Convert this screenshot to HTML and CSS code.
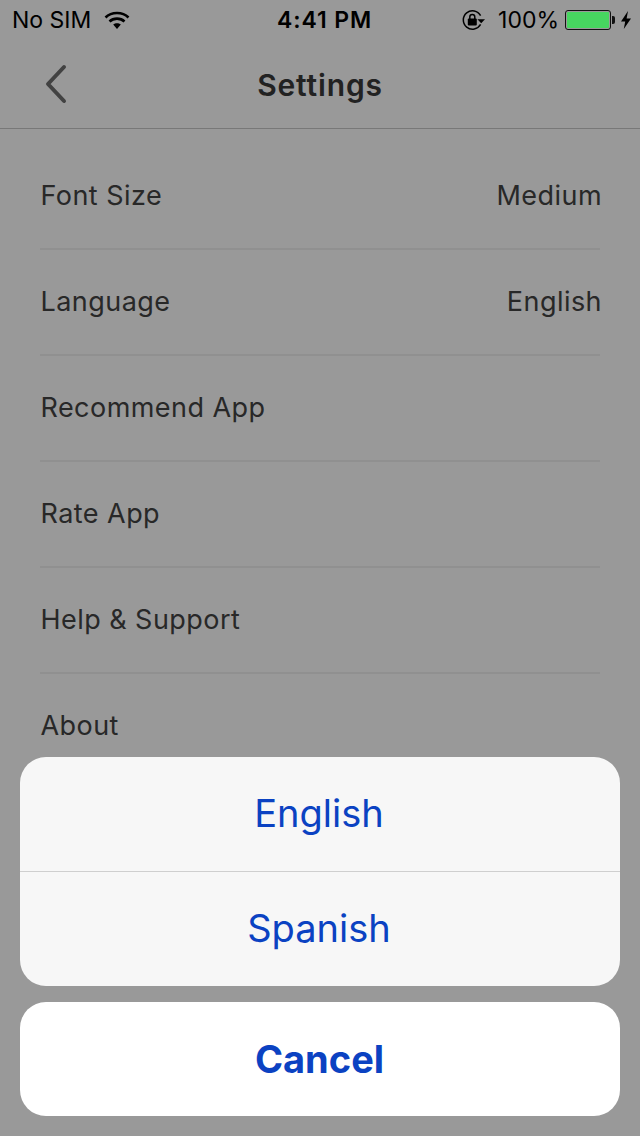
FILE: index.html
```html
<!DOCTYPE html>
<html lang="en">
<head>
  <meta charset="UTF-8" />
  <meta name="viewport" content="width=device-width, initial-scale=1.0">
  <title>Settings</title>
  <link rel="stylesheet" href="styles.css">
</head>
<body>
  <div class="phone">
    <div class="status-bar">
      <div class="status-left">
        <span>No SIM</span>
        <svg class="wifi" width="26" height="20" viewBox="0 0 26 20">
          <path d="M1.5 7.5C7.5 1.5 18.5 1.5 24.5 7.5" fill="none" stroke="#000" stroke-width="2.6"/>
          <path d="M5.5 11.5C9.5 7.6 16.5 7.6 20.5 11.5" fill="none" stroke="#000" stroke-width="2.6"/>
          <path d="M9.2 14.6C11.3 12.9 14.7 12.9 16.8 14.6L13 19Z" fill="#000"/>
        </svg>
      </div>
      <div class="status-time">4:41 PM</div>
      <div class="status-right">
        <svg class="lock" width="26" height="22" viewBox="0 0 26 22">
          <path d="M19.6 6.6A9.2 9.2 0 1 0 19.6 15.4" fill="none" stroke="#000" stroke-width="1.5"/>
          <path d="M16.4 10.2H24L20.2 14.2Z" fill="#000"/>
          <rect x="6.8" y="9.6" width="9" height="6.8" rx="1" fill="#000"/>
          <path d="M8.8 10V8A2.5 2.5 0 0 1 13.8 8V10" fill="none" stroke="#000" stroke-width="1.5"/>
        </svg>
        <span class="battery-text">100%</span>
        <span class="battery"><span class="battery-fill"></span></span>
        <span class="battery-tip"></span>
        <svg class="bolt" width="12" height="20" viewBox="0 0 12 20">
          <path d="M8 1L1 11.5H5.2L3.8 19L11 8.5H6.6Z" fill="#000"/>
        </svg>
      </div>
    </div>

    <header class="nav-bar">
      <svg class="back" width="26" height="40" viewBox="0 0 26 40">
        <path d="M21 3L5 20L21 37" fill="none" stroke="#6e6e6e" stroke-width="4" stroke-linecap="round" stroke-linejoin="round"/>
      </svg>
      <h1 class="nav-title">Settings</h1>
    </header>

    <ul class="settings">
      <li class="row"><span>Font Size</span><span>Medium</span></li>
      <li class="row"><span>Language</span><span>English</span></li>
      <li class="row"><span>Recommend App</span></li>
      <li class="row"><span>Rate App</span></li>
      <li class="row"><span>Help &amp; Support</span></li>
      <li class="row"><span>About</span></li>
    </ul>

    <div class="backdrop">
      <div class="sheet">
        <div class="sheet-option">English</div>
        <div class="sheet-option">Spanish</div>
      </div>
      <div class="sheet-cancel">Cancel</div>
    </div>
  </div>
</body>
</html>
```

FILE: styles.css
```css
* {
  box-sizing: border-box;
}

body {
  margin: 0;
  font-family: Inter, "Liberation Sans", sans-serif;
  background: #fff;
}

.phone {
  position: relative;
  width: 640px;
  height: 1136px;
  overflow: hidden;
  background: #fff;
}

.status-bar {
  position: relative;
  z-index: 2;
  height: 40px;
  padding: 0 8px 0 12px;
  display: grid;
  grid-template-columns: 1fr auto 1fr;
  align-items: center;
  color: #000;
  font-size: 23px;
}

.status-left {
  display: flex;
  align-items: center;
  gap: 13px;
}

.status-time {
  padding-left: 5px;
  font-weight: 600;
  letter-spacing: 0.9px;
}

.status-right {
  display: flex;
  align-items: center;
  justify-content: flex-end;
}

.battery-text {
  margin-left: 11px;
  margin-right: 6px;
}

.battery {
  width: 46px;
  height: 20px;
  padding: 1px;
  border: 1.5px solid #111;
  border-radius: 3px;
  display: flex;
}

.battery-fill {
  flex: 1;
  background: #47d660;
  border-radius: 1px;
}

.battery-tip {
  width: 3px;
  height: 8px;
  margin-left: 1px;
  background: #111;
  border-radius: 0 2px 2px 0;
}

.bolt {
  margin-left: 5px;
}

.nav-bar {
  height: 89px;
  padding: 6px 0 0 43px;
  display: flex;
  align-items: center;
  border-bottom: 1px solid #c8c8c8;
}

.back {
  flex: none;
  margin-top: -6px;
}

.nav-title {
  flex: 1;
  margin: -4px 0 0;
  padding-right: 69px;
  text-align: center;
  font-size: 30px;
  font-weight: 600;
  letter-spacing: 0.85px;
  color: #3a3a3a;
}

.settings {
  list-style: none;
  margin: 0;
  padding: 15px 40px 0;
}

.row {
  height: 106px;
  padding: 0 0 2px 0.5px;
  display: flex;
  align-items: center;
  justify-content: space-between;
  border-bottom: 2px solid #f0f0f0;
  font-size: 27px;
  letter-spacing: 0.45px;
  color: #444;
}

.row span + span {
  margin-right: -2px;
}

.row:last-child {
  border-bottom-color: transparent;
}

.backdrop {
  position: absolute;
  inset: 0;
  z-index: 1;
  padding: 0 20px 20px;
  display: flex;
  flex-direction: column;
  justify-content: flex-end;
  gap: 16px;
  background: rgba(0, 0, 0, 0.4);
}

.sheet {
  background: #f7f7f7;
  border-radius: 26px;
  overflow: hidden;
}

.sheet-option {
  height: 114px;
  padding: 0 2px 2px 0;
  display: flex;
  align-items: center;
  justify-content: center;
  font-size: 38px;
  color: #0b42c2;
}

.sheet-option + .sheet-option {
  height: 115px;
  border-top: 1px solid #cfcfcf;
}

.sheet-cancel {
  height: 114px;
  padding-right: 1px;
  display: flex;
  align-items: center;
  justify-content: center;
  background: #fff;
  border-radius: 26px;
  font-size: 38px;
  font-weight: 700;
  color: #0b42c2;
}
```
